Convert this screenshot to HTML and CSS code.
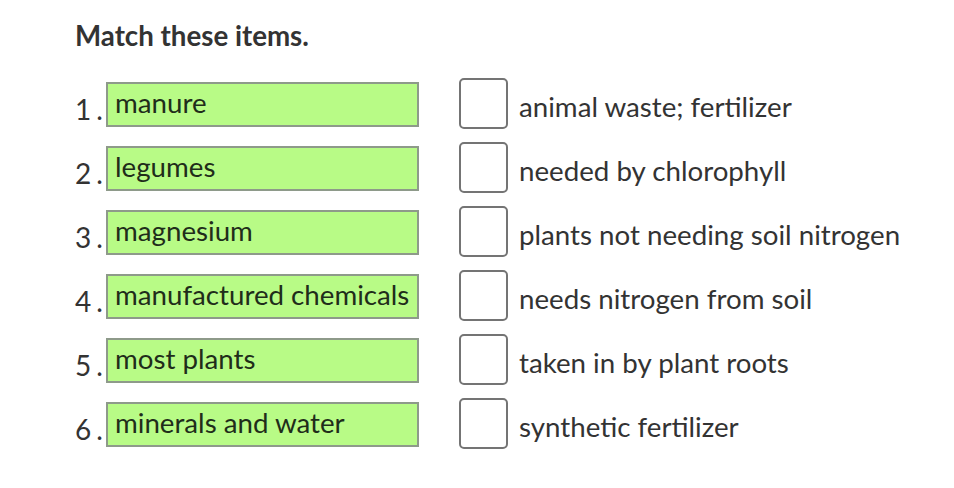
FILE: index.html
```html
<!DOCTYPE html>
<html>
<head>
<meta charset="utf-8">
<link rel="stylesheet" href="styles.css">
</head>
<body>
<div class="page">
  <h1 class="title">Match these items.</h1>
  <div class="match">
    <div class="row">
      <span class="num">1.</span><div class="term">manure</div>
      <div class="box"></div><span class="def">animal waste; fertilizer</span>
    </div>
    <div class="row">
      <span class="num">2.</span><div class="term">legumes</div>
      <div class="box"></div><span class="def">needed by chlorophyll</span>
    </div>
    <div class="row">
      <span class="num">3.</span><div class="term">magnesium</div>
      <div class="box"></div><span class="def">plants not needing soil nitrogen</span>
    </div>
    <div class="row">
      <span class="num">4.</span><div class="term">manufactured chemicals</div>
      <div class="box"></div><span class="def">needs nitrogen from soil</span>
    </div>
    <div class="row">
      <span class="num">5.</span><div class="term">most plants</div>
      <div class="box"></div><span class="def">taken in by plant roots</span>
    </div>
    <div class="row">
      <span class="num">6.</span><div class="term">minerals and water</div>
      <div class="box"></div><span class="def">synthetic fertilizer</span>
    </div>
  </div>
</div>
</body>
</html>
```

FILE: styles.css
```css
html, body {
  margin: 0;
  padding: 0;
  background: #ffffff;
}
.page {
  font-family: Lato, "Liberation Sans", sans-serif;
  color: #333333;
  padding: 17px 0 20px 75px;
}
.title {
  margin: 0;
  font-size: 27.7px;
  font-weight: 700;
  line-height: 38px;
  color: #333333;
}
.match {
  margin-top: 23px;
  display: flex;
  flex-direction: column;
  gap: 13px;
}
.row {
  display: flex;
  align-items: flex-start;
  height: 51px;
}
.num {
  width: 31px;
  font-size: 28px;
  line-height: 46px;
  margin-top: 8px;
  letter-spacing: 5px;
  color: #333333;
}
.term {
  box-sizing: border-box;
  width: 313px;
  height: 45px;
  margin-top: 4px;
  background: #b8fb86;
  border: 2px solid #8e9a8a;
  font-size: 27.7px;
  line-height: 37px;
  padding: 0 0 0 7px;
  color: #1f2d1a;
  white-space: nowrap;
}
.box {
  box-sizing: border-box;
  width: 49px;
  height: 51px;
  margin-left: 40px;
  border: 2px solid #747474;
  border-radius: 5px;
  background: #ffffff;
}
.def {
  margin-left: 11px;
  margin-top: 6px;
  font-size: 27.7px;
  line-height: 46px;
  color: #333333;
  white-space: nowrap;
}
```
